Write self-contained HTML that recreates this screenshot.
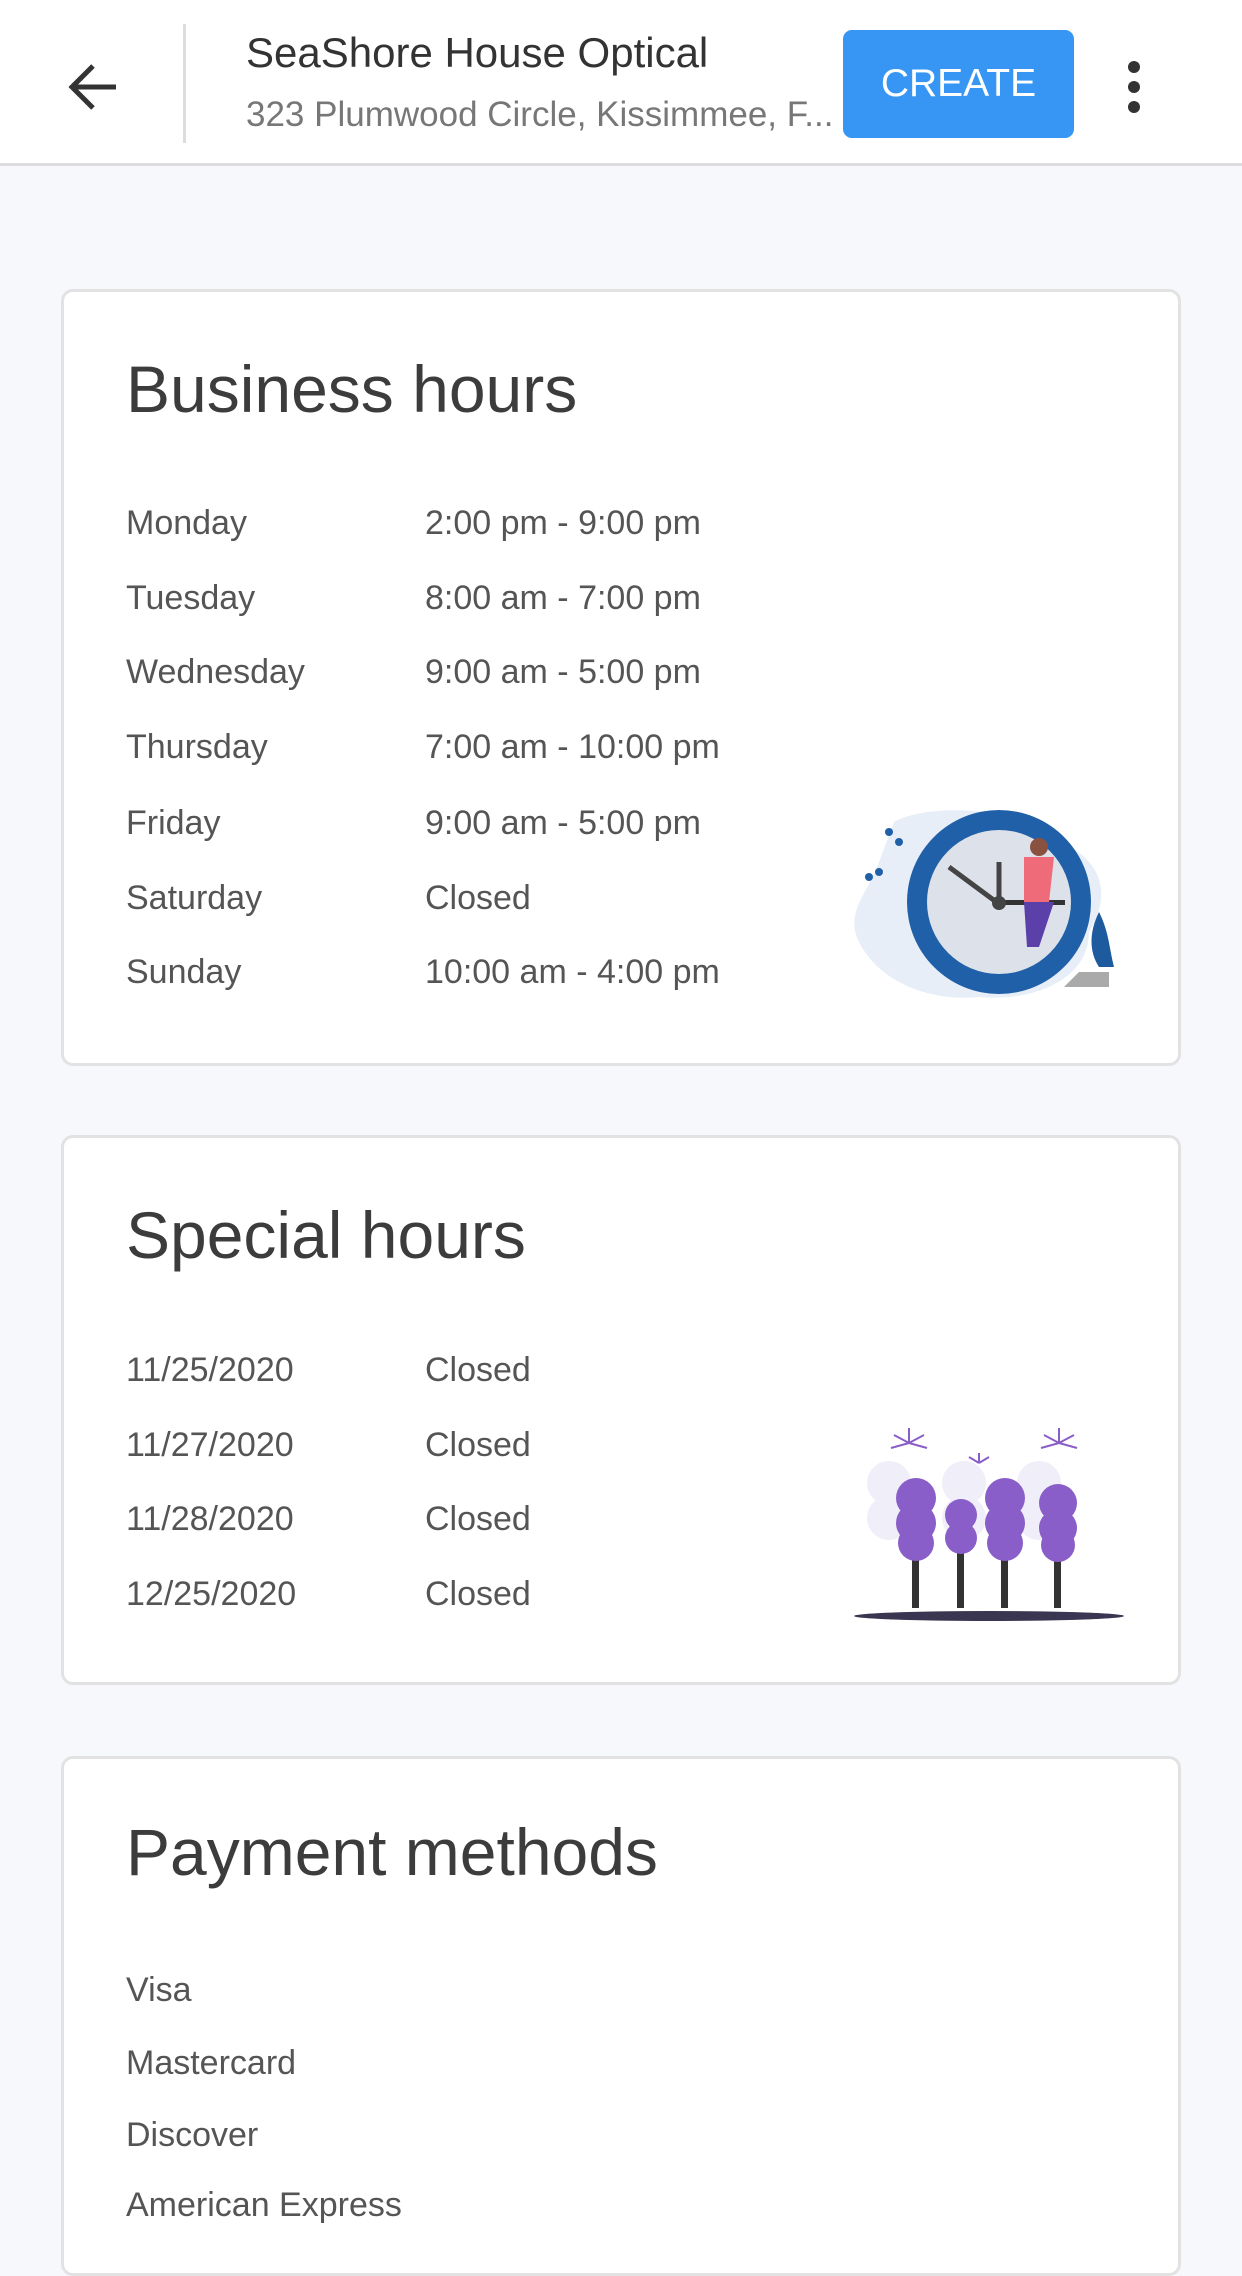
<!DOCTYPE html>
<html><head><meta charset="utf-8"><style>
*{margin:0;padding:0;box-sizing:border-box}
body{width:1242px;height:2208px;overflow:hidden;background:#f7f8fc;font-family:"Liberation Sans",sans-serif;color:#444;position:relative}
.hdr{position:absolute;left:0;top:0;width:1242px;height:166px;background:#fff;border-bottom:3px solid #dcdcdc}
.abs{position:absolute}
.card{position:absolute;left:61px;width:1120px;background:#fff;border:3px solid #e2e2e2;border-radius:12px}
.t{position:absolute;left:62px;font-size:66px;color:#3c3c3c;line-height:1}
.r{position:absolute;font-size:34px;color:#555;line-height:1}
</style></head><body>
<div class="hdr">
<svg class="abs" style="left:66px;top:62px" width="54" height="50" viewBox="0 0 54 50"><path d="M50 25H6M27 4L6 25l21 21" fill="none" stroke="#333" stroke-width="5"/></svg>
<div class="abs" style="left:183px;top:24px;width:3px;height:119px;background:#ddd"></div>
<div class="abs" style="left:246px;top:29px;font-size:42px;color:#333">SeaShore House Optical</div>
<div class="abs" style="left:246px;top:95px;font-size:35px;color:#777;width:596px;white-space:nowrap;overflow:hidden">323 Plumwood Circle, Kissimmee, F...</div>
<div class="abs" style="left:843px;top:30px;width:231px;height:108px;background:#3796f3;border-radius:9px;color:#fff;font-size:39px;text-align:center;line-height:108px">CREATE</div>
<svg class="abs" style="left:1122px;top:60px" width="24" height="54"><circle cx="12" cy="7" r="6" fill="#333"/><circle cx="12" cy="27" r="6" fill="#333"/><circle cx="12" cy="47" r="6" fill="#333"/></svg>
</div>

<div class="card" style="top:289px;height:777px">
<div class="t" style="top:64px">Business hours</div>
<div class="r" style="left:62px;top:214px">Monday</div><div class="r" style="left:361px;top:214px">2:00 pm - 9:00 pm</div>
<div class="r" style="left:62px;top:289px">Tuesday</div><div class="r" style="left:361px;top:289px">8:00 am - 7:00 pm</div>
<div class="r" style="left:62px;top:363px">Wednesday</div><div class="r" style="left:361px;top:363px">9:00 am - 5:00 pm</div>
<div class="r" style="left:62px;top:438px">Thursday</div><div class="r" style="left:361px;top:438px">7:00 am - 10:00 pm</div>
<div class="r" style="left:62px;top:514px">Friday</div><div class="r" style="left:361px;top:514px">9:00 am - 5:00 pm</div>
<div class="r" style="left:62px;top:589px">Saturday</div><div class="r" style="left:361px;top:589px">Closed</div>
<div class="r" style="left:62px;top:663px">Sunday</div><div class="r" style="left:361px;top:663px">10:00 am - 4:00 pm</div>
<svg class="abs" style="left:785px;top:510px" width="280" height="210" viewBox="0 0 280 210">
<path d="M45 20C80 0 180 5 210 40C250 55 265 90 240 130C240 180 180 200 130 195C80 200 30 180 10 140C-5 110 20 90 30 60Z" fill="#e8eef7"/>
<ellipse cx="150" cy="100" rx="92" ry="92" fill="#2060a8"/>
<ellipse cx="150" cy="100" rx="72" ry="72" fill="#dde1ea"/>
<path d="M150 60v42M100 65l50 37" stroke="#444" stroke-width="5"/>
<rect x="150" y="98" width="66" height="5" fill="#333"/>
<circle cx="150" cy="101" r="7" fill="#444"/>
<path d="M175 55h30l-5 45h-25z" fill="#f06b7a"/>
<path d="M175 100h30l-15 45h-12z" fill="#5a40a8"/>
<circle cx="190" cy="45" r="9" fill="#8a5040"/>
<path d="M250 110c-10 20-10 40 0 55h15c-5-20-5-35-15-55z" fill="#1e5a9e"/>
<path d="M215 185l15-15h30v15z" fill="#aaa"/>
<g fill="#2060a8"><circle cx="40" cy="30" r="4"/><circle cx="50" cy="40" r="4"/><circle cx="30" cy="70" r="4"/><circle cx="20" cy="75" r="4"/></g>
</svg>
</div>

<div class="card" style="top:1135px;height:550px">
<div class="t" style="top:64px">Special hours</div>
<div class="r" style="left:62px;top:215px">11/25/2020</div><div class="r" style="left:361px;top:215px">Closed</div>
<div class="r" style="left:62px;top:290px">11/27/2020</div><div class="r" style="left:361px;top:290px">Closed</div>
<div class="r" style="left:62px;top:364px">11/28/2020</div><div class="r" style="left:361px;top:364px">Closed</div>
<div class="r" style="left:62px;top:439px">12/25/2020</div><div class="r" style="left:361px;top:439px">Closed</div>
<svg class="abs" style="left:785px;top:285px" width="280" height="205" viewBox="0 0 280 205">
<g fill="#f0eef8"><circle cx="40" cy="60" r="22"/><circle cx="40" cy="95" r="22"/><circle cx="115" cy="60" r="22"/><circle cx="115" cy="95" r="22"/><circle cx="190" cy="60" r="22"/><circle cx="190" cy="95" r="22"/></g>
<g fill="#333"><rect x="63" y="120" width="7" height="65"/><rect x="108" y="130" width="7" height="55"/><rect x="152" y="125" width="7" height="60"/><rect x="205" y="125" width="7" height="60"/></g>
<g fill="#8a5ec8"><circle cx="67" cy="75" r="20"/><circle cx="67" cy="100" r="20"/><circle cx="67" cy="120" r="18"/><circle cx="112" cy="92" r="16"/><circle cx="112" cy="115" r="16"/><circle cx="156" cy="75" r="20"/><circle cx="156" cy="100" r="20"/><circle cx="156" cy="120" r="18"/><circle cx="209" cy="80" r="19"/><circle cx="209" cy="105" r="19"/><circle cx="209" cy="122" r="17"/></g>
<ellipse cx="140" cy="193" rx="135" ry="5" fill="#3a3550"/>
<g stroke="#8a5ec8" stroke-width="2"><path d="M60 20l-15-8M60 20l15-8M60 20v-15M60 20l-18 5M60 20l18 5"/><path d="M210 20l-15-8M210 20l15-8M210 20v-15M210 20l-18 5M210 20l18 5"/><path d="M130 40l-10-6M130 40l10-6M130 40v-10"/></g>
</svg>
</div>

<div class="card" style="top:1756px;height:520px">
<div class="t" style="top:60px">Payment methods</div>
<div class="r" style="left:62px;top:214px">Visa</div>
<div class="r" style="left:62px;top:287px">Mastercard</div>
<div class="r" style="left:62px;top:359px">Discover</div>
<div class="r" style="left:62px;top:429px">American Express</div>
</div>
</body></html>
